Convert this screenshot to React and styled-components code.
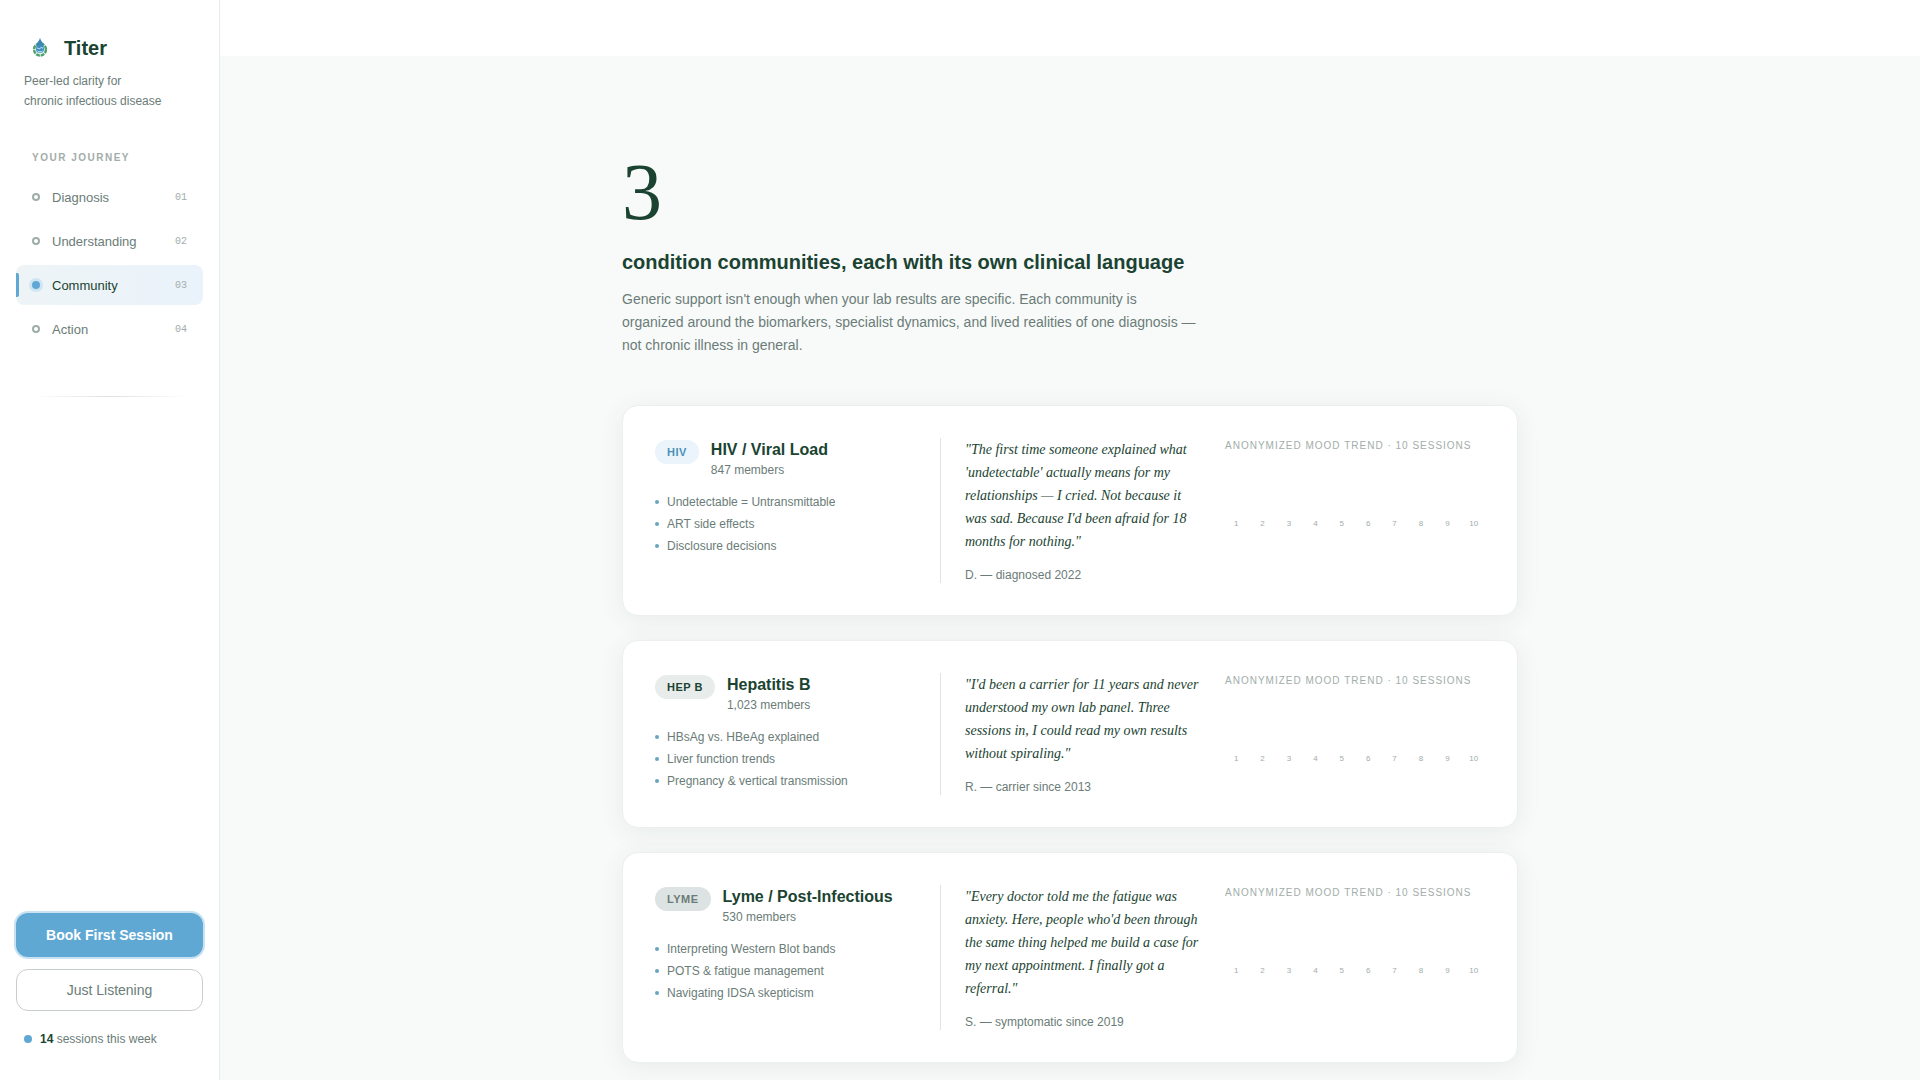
import React from 'react';
import styled, { createGlobalStyle } from 'styled-components';

const GlobalStyle = createGlobalStyle`
  * {
    box-sizing: border-box;
  }
  body {
    margin: 0;
    background: #f8faf9;
    color: #1b4332;
    font-family: 'Liberation Sans', Arial, sans-serif;
  }
  h1, h2, h3, p, ul, ol, blockquote, figure {
    margin: 0;
    padding: 0;
  }
  ul, ol {
    list-style: none;
  }
`;

const Page = styled.div`
  display: flex;
  min-height: 100vh;
`;

const Sidebar = styled.aside`
  position: sticky;
  top: 0;
  display: flex;
  flex-direction: column;
  flex: none;
  width: 220px;
  height: 100vh;
  padding: 32px 16px;
  background: #fefffe;
  border-right: 1px solid #e8eceb;
`;

const Brand = styled.a`
  display: flex;
  align-items: center;
  gap: 8px;
  padding-left: 8px;
  color: #1b4332;
  font-size: 20px;
  font-weight: bold;
  line-height: 32px;
  text-decoration: none;
`;

const Tagline = styled.p`
  margin-top: 7px;
  padding-left: 8px;
  color: #6b7c78;
  font-size: 12px;
  line-height: 20px;
`;

const NavTitle = styled.h2`
  margin-top: 40px;
  padding-left: 16px;
  color: #a3adab;
  font-size: 10px;
  font-weight: bold;
  letter-spacing: 1.5px;
  line-height: 14px;
`;

const NavList = styled.ol`
  display: flex;
  flex-direction: column;
  gap: 4px;
  margin-top: 12px;
`;

const NavLink = styled.a`
  position: relative;
  display: flex;
  align-items: center;
  gap: 12px;
  height: 40px;
  padding: 0 16px;
  border-radius: 8px;
  background: ${({ $active }) =>
    $active ? 'linear-gradient(90deg, #eef4f6, #eaf3fb)' : 'transparent'};
  color: ${({ $active }) => ($active ? '#1b4332' : '#6b7c78')};
  font-size: 13px;
  text-decoration: none;

  &::before {
    content: '';
    display: ${({ $active }) => ($active ? 'block' : 'none')};
    position: absolute;
    left: 0;
    top: 8px;
    width: 3px;
    height: 24px;
    border-radius: 0 2px 2px 0;
    background: #5fa8d3;
  }
`;

const NavDot = styled.span`
  width: 8px;
  height: 8px;
  border: 2px solid ${({ $active }) => ($active ? '#5fa8d3' : '#9fadaa')};
  border-radius: 50%;
  background: ${({ $active }) => ($active ? '#5fa8d3' : 'transparent')};
  box-shadow: ${({ $active }) => ($active ? '0 0 0 3px #cfe5f4' : 'none')};
`;

const NavNumber = styled.span`
  margin-left: auto;
  color: #a3adab;
  font-family: 'Liberation Mono', monospace;
  font-size: 10px;
`;

const Divider = styled.hr`
  height: 1px;
  margin: 47px 16px 0;
  border: 0;
  background: linear-gradient(90deg, transparent, #dce2e0, transparent);
`;

const SidebarFooter = styled.div`
  display: flex;
  flex-direction: column;
  gap: 12px;
  margin-top: auto;
`;

const Button = styled.button`
  height: ${({ $primary }) => ($primary ? '44px' : '42px')};
  border: ${({ $primary }) => ($primary ? '0' : '1px solid #c8cecc')};
  border-radius: 12px;
  background: ${({ $primary }) => ($primary ? '#5fa8d3' : 'transparent')};
  box-shadow: ${({ $primary }) => ($primary ? '0 0 0 2px #c8e2f3' : 'none')};
  color: ${({ $primary }) => ($primary ? '#fff' : '#6b7c78')};
  font-family: inherit;
  font-size: 14px;
  font-weight: ${({ $primary }) => ($primary ? 'bold' : 'normal')};
  cursor: pointer;
`;

const Status = styled.p`
  display: flex;
  align-items: center;
  gap: 8px;
  padding: 7px 8px 0;
  color: #6b7c78;
  font-size: 12px;
  line-height: 18px;

  &::before {
    content: '';
    width: 8px;
    height: 8px;
    border-radius: 50%;
    background: #5fa8d3;
  }

  strong {
    color: #1b4332;
  }
`;

const Main = styled.main`
  flex: 1;
  min-width: 0;
`;

const TopBar = styled.header`
  height: 56px;
  background: #fff;
`;

const Content = styled.section`
  max-width: 896px;
  margin: 0 auto;
  padding: 96px 0;
`;

const Count = styled.div`
  font-family: 'Liberation Serif', 'Times New Roman', serif;
  font-size: 80px;
  line-height: 80px;
`;

const Title = styled.h1`
  margin-top: 16px;
  font-size: 20px;
  line-height: 28px;
`;

const Intro = styled.p`
  max-width: 576px;
  margin-top: 12px;
  color: #6b7c78;
  font-size: 14px;
  line-height: 23px;
`;

const Cards = styled.div`
  display: flex;
  flex-direction: column;
  gap: 24px;
  margin-top: 48px;
`;

const Card = styled.article`
  display: grid;
  grid-template-columns: 1fr 1fr 260px;
  padding: 32px;
  border: 1px solid #ebefee;
  border-radius: 16px;
  background: #fefffe;
  box-shadow: 0 4px 24px rgba(27, 67, 50, 0.08);
`;

const CardHead = styled.div`
  display: flex;
  align-items: flex-start;
  gap: 12px;
`;

const tones = {
  blue: { background: '#eaf4fa', color: '#4a90b8' },
  green: { background: '#e8eceb', color: '#1b4332' },
  gray: { background: '#dde3e2', color: '#6b7c78' },
};

const Badge = styled.span`
  margin-top: 2px;
  padding: 0 12px;
  border-radius: 12px;
  background: ${({ $tone }) => tones[$tone].background};
  color: ${({ $tone }) => tones[$tone].color};
  font-size: 11px;
  font-weight: bold;
  letter-spacing: 0.5px;
  line-height: 24px;
`;

const CardTitle = styled.h3`
  font-size: 16px;
  line-height: 24px;
`;

const Members = styled.p`
  color: #6b7c78;
  font-size: 12px;
  line-height: 16px;
`;

const Topics = styled.ul`
  margin-top: 13px;
`;

const Topic = styled.li`
  display: flex;
  align-items: center;
  gap: 8px;
  color: #6b7c78;
  font-size: 12px;
  line-height: 22px;

  &::before {
    content: '';
    width: 4px;
    height: 4px;
    border-radius: 50%;
    background: #68a5c0;
  }
`;

const Quote = styled.figure`
  padding: 0 24px;
  border-left: 1px solid #e0e5e3;

  blockquote {
    font-family: 'Liberation Serif', 'Times New Roman', serif;
    font-size: 14px;
    font-style: italic;
    line-height: 23px;
  }

  figcaption {
    margin-top: 14px;
    color: #6b7c78;
    font-size: 12px;
    line-height: 16px;
  }
`;

const TrendLabel = styled.p`
  color: #a3adab;
  font-size: 10px;
  letter-spacing: 1px;
  line-height: 16px;
`;

const Trend = styled.ol`
  display: grid;
  grid-template-columns: repeat(10, 1fr);
  gap: 4px;
  padding-top: 64px;
  color: #a3adab;
  font-size: 8px;
  line-height: 12px;
  text-align: center;
`;

const steps = [
  { number: '01', label: 'Diagnosis' },
  { number: '02', label: 'Understanding' },
  { number: '03', label: 'Community', active: true },
  { number: '04', label: 'Action' },
];

const communities = [
  {
    tag: 'HIV',
    tone: 'blue',
    name: 'HIV / Viral Load',
    members: '847',
    topics: ['Undetectable = Untransmittable', 'ART side effects', 'Disclosure decisions'],
    quote:
      "The first time someone explained what 'undetectable' actually means for my relationships — I cried. Not because it was sad. Because I'd been afraid for 18 months for nothing.",
    author: 'D. — diagnosed 2022',
  },
  {
    tag: 'HEP B',
    tone: 'green',
    name: 'Hepatitis B',
    members: '1,023',
    topics: ['HBsAg vs. HBeAg explained', 'Liver function trends', 'Pregnancy & vertical transmission'],
    quote:
      "I'd been a carrier for 11 years and never understood my own lab panel. Three sessions in, I could read my own results without spiraling.",
    author: 'R. — carrier since 2013',
  },
  {
    tag: 'LYME',
    tone: 'gray',
    name: 'Lyme / Post-Infectious',
    members: '530',
    topics: ['Interpreting Western Blot bands', 'POTS & fatigue management', 'Navigating IDSA skepticism'],
    quote:
      "Every doctor told me the fatigue was anxiety. Here, people who'd been through the same thing helped me build a case for my next appointment. I finally got a referral.",
    author: 'S. — symptomatic since 2019',
  },
];

const sessions = [1, 2, 3, 4, 5, 6, 7, 8, 9, 10];

const Logo = () => (
  <svg width="32" height="32" viewBox="0 0 32 32" aria-hidden="true">
    <circle cx="16" cy="17.500" r="7" fill="#e2f1ee" />
    <circle
      cx="16"
      cy="17.500"
      r="6"
      fill="none"
      stroke="#4f9f6a"
      strokeWidth="2.400"
      strokeDasharray="3.700 1"
    />
    <path d="M16 6c.8 3 3.800 5.500 3.800 8.500h-7.600C12.200 11.500 15.200 9 16 6z" fill="#3b86b5" />
    <circle cx="16" cy="17" r="4" fill="#3f8fc4" />
    <path d="M13 16.500c1-1.400 2 1.200 3 0s2-1.200 3 0" fill="none" stroke="#d8f0f5" strokeWidth="1" />
    <path d="M13.500 19c1.500 1.200 3.500 1.200 5 0" fill="none" stroke="#d8f0f5" strokeWidth="1" />
  </svg>
);

const Community = ({ tag, tone, name, members, topics, quote, author }) => (
  <Card>
    <div>
      <CardHead>
        <Badge $tone={tone}>{tag}</Badge>
        <div>
          <CardTitle>{name}</CardTitle>
          <Members>{`${members} members`}</Members>
        </div>
      </CardHead>
      <Topics>
        {topics.map((topic) => (
          <Topic key={topic}>{topic}</Topic>
        ))}
      </Topics>
    </div>
    <Quote>
      <blockquote>{`"${quote}"`}</blockquote>
      <figcaption>{author}</figcaption>
    </Quote>
    <div>
      <TrendLabel>ANONYMIZED MOOD TREND · 10 SESSIONS</TrendLabel>
      <Trend>
        {sessions.map((session) => (
          <li key={session}>{session}</li>
        ))}
      </Trend>
    </div>
  </Card>
);

const App = () => (
  <>
    <GlobalStyle />
    <Page>
      <Sidebar>
        <Brand href="#">
          <Logo />
          Titer
        </Brand>
        <Tagline>
          Peer-led clarity for
          <br />
          chronic infectious disease
        </Tagline>
        <nav>
          <NavTitle>YOUR JOURNEY</NavTitle>
          <NavList>
            {steps.map(({ number, label, active }) => (
              <li key={number}>
                <NavLink href={`#${label.toLowerCase()}`} $active={active}>
                  <NavDot $active={active} />
                  {label}
                  <NavNumber>{number}</NavNumber>
                </NavLink>
              </li>
            ))}
          </NavList>
        </nav>
        <Divider />
        <SidebarFooter>
          <Button type="button" $primary>
            Book First Session
          </Button>
          <Button type="button">Just Listening</Button>
          <Status>
            <span>
              <strong>14</strong> sessions this week
            </span>
          </Status>
        </SidebarFooter>
      </Sidebar>
      <Main>
        <TopBar />
        <Content>
          <Count>3</Count>
          <Title>condition communities, each with its own clinical language</Title>
          <Intro>
            Generic support isn't enough when your lab results are specific. Each community is
            organized around the biomarkers, specialist dynamics, and lived realities of one
            diagnosis — not chronic illness in general.
          </Intro>
          <Cards>
            {communities.map((community) => (
              <Community key={community.tag} {...community} />
            ))}
          </Cards>
        </Content>
      </Main>
    </Page>
  </>
);

export default App;
